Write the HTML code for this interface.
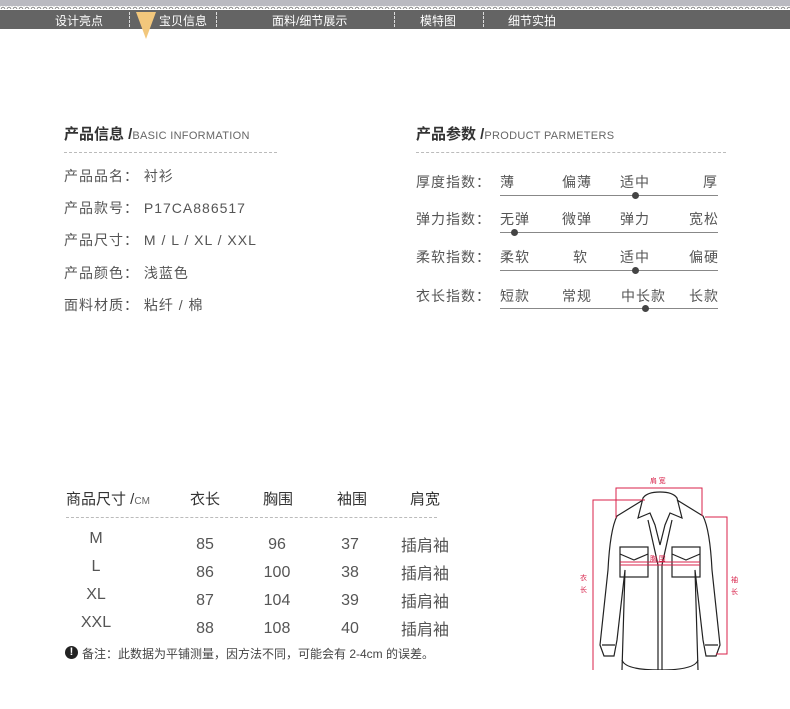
<!DOCTYPE html>
<html><head><meta charset="utf-8"><style>
body{margin:0;width:790px;height:709px;background:#fff;position:relative;overflow:hidden;font-family:"Liberation Sans","Noto Sans CJK SC",sans-serif;color:#555}
.a{position:absolute;white-space:nowrap}
.nav{position:absolute;left:0;top:10px;width:790px;height:19px;background:#646464}
.nav span{position:absolute;top:2px;color:#fff;font-size:12px}
.sep{position:absolute;top:2px;height:15px;border-left:1px dashed #ddd}
.t{font-size:15px;font-weight:bold;color:#333}
.t small{font-size:11px;font-weight:normal;color:#666;letter-spacing:.3px}
.dash{position:absolute;height:0;border-top:1px dashed #bbb}
.r{font-size:14px;color:#555;letter-spacing:1px}
.ln{position:absolute;left:500px;width:218px;height:1px;background:#888}
.dot{position:absolute;width:7px;height:7px;border-radius:50%;background:#444}
.c{position:absolute;font-size:16px;color:#555;text-align:center;width:60px}
</style></head><body>
<div class="a" style="left:0;top:0;width:790px;height:8px;background:#b9b9c0"></div>
<div class="a" style="left:0;top:6px;width:790px;height:3px;background:repeating-radial-gradient(circle at 3px 3px,#fff 0 1px,#888 1.5px 2px,#fff 2.5px);background-size:6px 4px"></div>
<div class="nav">
<span style="left:55px">设计亮点</span><div class="sep" style="left:129px"></div>
<span style="left:159px">宝贝信息</span><div class="sep" style="left:216px"></div>
<span style="left:272px">面料/细节展示</span><div class="sep" style="left:394px"></div>
<span style="left:420px">模特图</span><div class="sep" style="left:483px"></div>
<span style="left:508px">细节实拍</span>
</div>
<svg class="a" style="left:136px;top:12px" width="22" height="28"><polygon points="0,0 20,0 10,27" fill="#f2c77c"/></svg>

<div class="a t" style="left:64px;top:123px">产品信息 /<small>BASIC INFORMATION</small></div>
<div class="dash" style="left:64px;top:152px;width:213px"></div>
<div class="a r" style="left:64px;top:166px">产品品名： 衬衫</div>
<div class="a r" style="left:64px;top:198px">产品款号： P17CA886517</div>
<div class="a r" style="left:64px;top:230px">产品尺寸： M / L / XL / XXL</div>
<div class="a r" style="left:64px;top:263px">产品颜色： 浅蓝色</div>
<div class="a r" style="left:64px;top:295px">面料材质： 粘纤 / 棉</div>

<div class="a t" style="left:416px;top:123px">产品参数 /<small>PRODUCT PARMETERS</small></div>
<div class="dash" style="left:416px;top:152px;width:310px"></div>

<div class="a r" style="left:416px;top:172px">厚度指数：</div>
<div class="a r" style="left:500px;top:172px">薄</div><div class="a r" style="left:562px;top:172px">偏薄</div><div class="a r" style="left:620px;top:172px">适中</div><div class="a r" style="left:703px;top:172px">厚</div>
<div class="ln" style="top:195px"></div><div class="dot" style="left:632px;top:192px"></div>

<div class="a r" style="left:416px;top:209px">弹力指数：</div>
<div class="a r" style="left:500px;top:209px">无弹</div><div class="a r" style="left:562px;top:209px">微弹</div><div class="a r" style="left:620px;top:209px">弹力</div><div class="a r" style="left:689px;top:209px">宽松</div>
<div class="ln" style="top:232px"></div><div class="dot" style="left:511px;top:229px"></div>

<div class="a r" style="left:416px;top:247px">柔软指数：</div>
<div class="a r" style="left:500px;top:247px">柔软</div><div class="a r" style="left:573px;top:247px">软</div><div class="a r" style="left:620px;top:247px">适中</div><div class="a r" style="left:689px;top:247px">偏硬</div>
<div class="ln" style="top:270px"></div><div class="dot" style="left:632px;top:267px"></div>

<div class="a r" style="left:416px;top:286px">衣长指数：</div>
<div class="a r" style="left:500px;top:286px">短款</div><div class="a r" style="left:562px;top:286px">常规</div><div class="a r" style="left:621px;top:286px">中长款</div><div class="a r" style="left:689px;top:286px">长款</div>
<div class="ln" style="top:308px"></div><div class="dot" style="left:642px;top:305px"></div>

<div class="a" style="left:66px;top:488px;font-size:15px;color:#333">商品尺寸 /<span style="font-size:10px;color:#666">CM</span></div>
<div class="a" style="left:190px;top:488px;font-size:15px;color:#333">衣长</div>
<div class="a" style="left:263px;top:488px;font-size:15px;color:#333">胸围</div>
<div class="a" style="left:337px;top:488px;font-size:15px;color:#333">袖围</div>
<div class="a" style="left:410px;top:488px;font-size:15px;color:#333">肩宽</div>
<div class="dash" style="left:66px;top:517px;width:371px"></div>

<div class="c" style="left:66px;top:530px">M</div><div class="c" style="left:66px;top:558px">L</div><div class="c" style="left:66px;top:586px">XL</div><div class="c" style="left:66px;top:614px">XXL</div>
<div class="c" style="left:175px;top:536px">85</div><div class="c" style="left:175px;top:564px">86</div><div class="c" style="left:175px;top:592px">87</div><div class="c" style="left:175px;top:620px">88</div>
<div class="c" style="left:247px;top:536px">96</div><div class="c" style="left:247px;top:564px">100</div><div class="c" style="left:247px;top:592px">104</div><div class="c" style="left:247px;top:620px">108</div>
<div class="c" style="left:320px;top:536px">37</div><div class="c" style="left:320px;top:564px">38</div><div class="c" style="left:320px;top:592px">39</div><div class="c" style="left:320px;top:620px">40</div>
<div class="c" style="left:395px;top:532px">插肩袖</div><div class="c" style="left:395px;top:560px">插肩袖</div><div class="c" style="left:395px;top:588px">插肩袖</div><div class="c" style="left:395px;top:616px">插肩袖</div>

<div class="a" style="left:65px;top:646px;width:13px;height:13px;border-radius:50%;background:#222;color:#fff;font-size:11px;font-weight:bold;text-align:center;line-height:13px">!</div>
<div class="a" style="left:82px;top:645px;font-size:12px;color:#444">备注：此数据为平铺测量，因方法不同，可能会有 2-4cm 的误差。</div>

<svg class="a" style="left:570px;top:470px" width="180" height="200" viewBox="0 0 180 200" fill="none">
<g stroke="#222" stroke-width="1.2">
<path d="M73 28 Q77 22 90 22 Q103 22 107 28 L112 48 L100 43 L95 55 L90 75 L85 55 L80 43 L68 48 Z"/>
<path d="M73 30 L47 46 Q40 60 38 100 L30 175 L34 186 L44 186 L47 170 L55 100 L52 200"/>
<path d="M107 30 L133 46 Q140 60 142 100 L150 175 L146 186 L136 186 L133 170 L125 100 L128 200"/>
<path d="M52 190 Q55 200 90 200 Q125 200 128 190"/>
<path d="M78 50 L88 95 L88 200 M102 50 L92 95 L92 200"/>
<rect x="50" y="77" width="28" height="30"/><rect x="102" y="77" width="28" height="30"/>
<path d="M50 84 L64 90 L78 84 M102 84 L116 90 L130 84"/>
<path d="M32 175 L45 175 M135 175 L148 175"/>
</g>
<g stroke="#d8224a" stroke-width="1">
<path d="M46 48 V18 H132 V46"/><path d="M23 200 V30 H75"/><path d="M135 47 H157 V184 H146"/>
<path d="M50 92 H130 M50 95 H130"/>
</g>
<g fill="#d8224a" font-size="7" font-family="Noto Sans CJK SC,sans-serif">
<text x="80" y="13">肩 宽</text><text x="80" y="91">胸 围</text>
<text x="10" y="110">衣</text><text x="10" y="122">长</text>
<text x="161" y="112">袖</text><text x="161" y="124">长</text>
</g>
</svg>
</body></html>
